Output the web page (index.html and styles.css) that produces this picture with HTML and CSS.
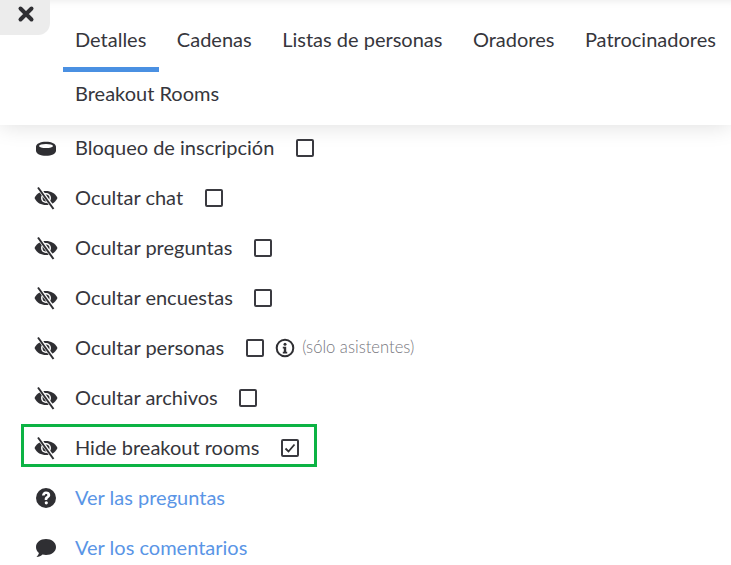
FILE: index.html
```html
<!DOCTYPE html>
<html lang="es">
<head>
<meta charset="utf-8">
<title>Detalles</title>
<link rel="stylesheet" href="styles.css">
</head>
<body>
<header class="header">
  <button class="close" aria-label="Cerrar">
    <svg width="18" height="18" viewBox="0 0 18 18"><path d="M3.500 3.500l11 11M14.500 3.500l-11 11" stroke="#2f2f33" stroke-width="4" stroke-linecap="round" fill="none"/></svg>
  </button>
  <nav class="tabs">
    <a class="tab tab-active">Detalles</a>
    <a class="tab">Cadenas</a>
    <a class="tab">Listas de personas</a>
    <a class="tab">Oradores</a>
    <a class="tab">Patrocinadores</a>
    <a class="tab">Breakout Rooms</a>
  </nav>
</header>
<main class="list">
  <svg class="defs" width="0" height="0">
    <defs>
      <symbol id="eye" viewBox="0 0 25 24">
        <path fill="#2f2f33" d="M1.500 12C4 7 8 5 13 5S22 7 24.500 12C22 17 18 19 13 19S4 17 1.500 12z"/>
        <circle cx="13" cy="12" r="5" fill="#fff"/>
        <circle cx="13" cy="12" r="3.500" fill="#2f2f33"/>
        <path stroke="#fff" stroke-width="3.800" d="M5 1l16 22" fill="none"/>
        <path stroke="#2f2f33" stroke-width="2" d="M5 1.500l15.500 21.500" fill="none"/>
      </symbol>
    </defs>
  </svg>
  <div class="row">
    <svg class="icon" viewBox="0 0 25 24"><path fill="#2f2f33" d="M13 5.700c5.500 0 10 2 10 5v4c0 3-4.500 5-10 5s-10-2-10-5v-4c0-3 4.500-5 10-5z"/><ellipse cx="13" cy="10" rx="7" ry="2" fill="#fff"/></svg>
    <span class="label">Bloqueo de inscripción</span><span class="check"></span>
  </div>
  <div class="row"><svg class="icon"><use href="#eye"/></svg><span class="label">Ocultar chat</span><span class="check"></span></div>
  <div class="row"><svg class="icon"><use href="#eye"/></svg><span class="label">Ocultar preguntas</span><span class="check"></span></div>
  <div class="row"><svg class="icon"><use href="#eye"/></svg><span class="label">Ocultar encuestas</span><span class="check"></span></div>
  <div class="row">
    <svg class="icon"><use href="#eye"/></svg><span class="label">Ocultar personas</span><span class="check"></span>
    <svg class="info" viewBox="0 0 20 20"><circle cx="10" cy="10" r="8.300" fill="none" stroke="#2f2f33" stroke-width="2"/><circle cx="10" cy="6.200" r="1.500" fill="#2f2f33"/><path fill="#2f2f33" d="M7.800 8.800h3.400v5h1v1.600H7.800v-1.600h1v-3.400h-1z"/></svg>
    <span class="note">(sólo asistentes)</span>
  </div>
  <div class="row"><svg class="icon"><use href="#eye"/></svg><span class="label">Ocultar archivos</span><span class="check"></span></div>
  <div class="row row-highlight">
    <svg class="icon"><use href="#eye"/></svg><span class="label">Hide breakout rooms</span>
    <span class="check check-on"><svg viewBox="0 0 14 14" width="14" height="14"><path d="M2.500 7.500l3 3 6-7" stroke="#2f2f33" stroke-width="1.800" fill="none"/></svg></span>
  </div>
  <div class="row">
    <svg class="icon" viewBox="0 0 25 24"><path fill="#2f2f33" fill-rule="evenodd" d="M13 2a10 10 0 1 1 0 20 10 10 0 0 1 0-20zM9 9.500h2.700c.2-1 .7-1.500 1.400-1.500.8 0 1.300.5 1.300 1.100 0 1.300-2.700 1.600-2.700 4.100v.8h2.600v-.5c0-1.400 2.900-1.800 2.900-4.600C17.200 6.500 15.400 5.400 13 5.400c-2.500 0-3.800 1.700-4 4.100zM13.300 15.200a1.600 1.600 0 1 0 0 3.200 1.600 1.600 0 0 0 0-3.200z"/></svg>
    <a class="link">Ver las preguntas</a>
  </div>
  <div class="row">
    <svg class="icon" viewBox="0 0 25 24"><path fill="#2f2f33" d="M13 3c5.700 0 10 3.500 10 8s-4.300 8-10 8c-1.200 0-2.400-.2-3.500-.5C8 19.900 6 21 3.500 21c1.200-1.200 2.200-2.900 2.400-4.100C4 15.400 3 13.300 3 11 3 6.500 7.300 3 13 3z"/></svg>
    <a class="link">Ver los comentarios</a>
  </div>
</main>
</body>
</html>
```

FILE: styles.css
```css
* { box-sizing: border-box; }
html, body { height: 100%; }
body {
  margin: 0;
  height: 565px;
  overflow: hidden;
  background: #fff;
  font-family: Lato, "Liberation Sans", sans-serif;
  font-size: 20px;
  color: #36363c;
}
.header {
  position: relative;
  z-index: 2;
  height: 125px;
  background: #fff;
  box-shadow: 0 0 22px rgba(0, 0, 0, .14), inset 0 8px 8px -8px rgba(0, 0, 0, .1);
  padding: 16px 0 0 63px;
}
.close {
  position: absolute;
  left: 0;
  top: 0;
  width: 50px;
  height: 35px;
  border: 0;
  padding: 0 0 7px 1px;
  background: #ececec;
  border-bottom-right-radius: 12px;
  display: flex;
  align-items: center;
  justify-content: center;
}
.tabs { display: flex; flex-wrap: wrap; column-gap: 6px; }
.tab {
  height: 56px;
  padding: 9px 12.5px 0 12px;
  line-height: 28px;
  white-space: nowrap;
}
.tab-active { border-bottom: 5px solid #4a90e2; }
.tabs .tab:last-child { height: 50px; padding-top: 7px; }
.list { margin-top: -2px; }
.row {
  display: flex;
  align-items: center;
  height: 50px;
  padding-left: 33px;
}
.defs { position: absolute; }
.icon { width: 25px; height: 24px; flex: none; margin-right: 17px; }
.label, .link { padding-bottom: 2px; }
.check {
  width: 18px;
  height: 18px;
  margin-left: 21.5px;
  border: 2px solid #3a3a40;
  border-radius: 2px;
  display: flex;
  align-items: center;
  justify-content: center;
}
.info { width: 20px; height: 20px; margin-left: 11.5px; }
.note { margin-left: 7px; padding-bottom: 2px; font-size: 16.6px; font-weight: 300; color: #77777e; }
.link { color: #5a95e6; }
.row-highlight {
  width: 296px;
  height: 43px;
  margin: 1px 0 6px 21px;
  padding: 5px 0 0 9px;
  border: 3px solid #0cb344;
}
```
